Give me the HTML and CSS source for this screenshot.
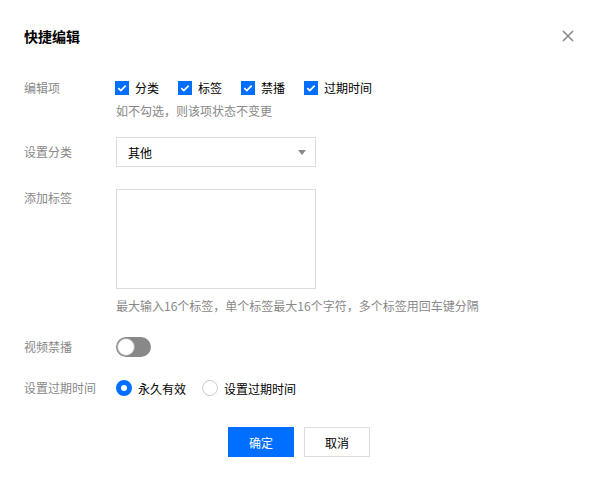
FILE: index.html
```html
<!DOCTYPE html>
<html lang="zh-CN">
<head>
<meta charset="utf-8">
<title>快捷编辑</title>
<link rel="stylesheet" href="styles.css">
</head>
<body>
<div class="dialog">
  <div class="header">
    <h2 class="title">快捷编辑</h2>
    <span class="close" aria-label="关闭">
      <svg width="12" height="12" viewBox="0 0 12 12"><path d="M1 1L11 11M11 1L1 11" stroke="#888" stroke-width="1.6" fill="none"/></svg>
    </span>
  </div>

  <div class="form">
    <div class="row row-items">
      <div class="label">编辑项</div>
      <div class="control">
        <div class="checks">
          <label class="check"><span class="box"><svg width="14" height="14" viewBox="0 0 14 14"><path d="M3.3 7.2L5.8 9.6L10.7 4.6" stroke="#fff" stroke-width="1.8" fill="none"/></svg></span><span>分类</span></label>
          <label class="check"><span class="box"><svg width="14" height="14" viewBox="0 0 14 14"><path d="M3.3 7.2L5.8 9.6L10.7 4.6" stroke="#fff" stroke-width="1.8" fill="none"/></svg></span><span>标签</span></label>
          <label class="check"><span class="box"><svg width="14" height="14" viewBox="0 0 14 14"><path d="M3.3 7.2L5.8 9.6L10.7 4.6" stroke="#fff" stroke-width="1.8" fill="none"/></svg></span><span>禁播</span></label>
          <label class="check"><span class="box"><svg width="14" height="14" viewBox="0 0 14 14"><path d="M3.3 7.2L5.8 9.6L10.7 4.6" stroke="#fff" stroke-width="1.8" fill="none"/></svg></span><span>过期时间</span></label>
        </div>
        <div class="hint hint-items">如不勾选，则该项状态不变更</div>
      </div>
    </div>

    <div class="row row-select">
      <div class="label label-mid">设置分类</div>
      <div class="control">
        <div class="select"><span>其他</span><span class="arrow"></span></div>
      </div>
    </div>

    <div class="row row-tags">
      <div class="label label-top">添加标签</div>
      <div class="control">
        <div class="textarea"></div>
        <div class="hint hint-tags">最大输入16个标签，单个标签最大16个字符，多个标签用回车键分隔</div>
      </div>
    </div>

    <div class="row row-switch">
      <div class="label">视频禁播</div>
      <div class="control">
        <span class="switch"><span class="knob"></span></span>
      </div>
    </div>

    <div class="row row-radio">
      <div class="label">设置过期时间</div>
      <div class="control radios">
        <label class="radio"><span class="dot on"></span><span>永久有效</span></label>
        <label class="radio"><span class="dot"></span><span>设置过期时间</span></label>
      </div>
    </div>
  </div>

  <div class="footer">
    <button class="btn btn-primary">确定</button>
    <button class="btn">取消</button>
  </div>
</div>
</body>
</html>
```

FILE: styles.css
```css
* { box-sizing: border-box; }
html, body {
  margin: 0;
  padding: 0;
  background: #fff;
}
body {
  font-family: "Noto Sans CJK SC", "Noto Sans", sans-serif;
  font-size: 12px;
  color: #000;
}
.dialog {
  width: 594px;
  height: 479px;
  padding: 26px 18px 0 24px;
}
.header {
  display: flex;
  justify-content: space-between;
  align-items: center;
  height: 20px;
}
.title {
  margin: 0;
  font-size: 14px;
  font-weight: bold;
  line-height: 20px;
}
.close {
  width: 16px;
  height: 16px;
  display: flex;
  align-items: center;
  justify-content: center;
  margin-top: -1px;
}
.form {
  margin-top: 32px;
}
.row {
  display: flex;
}
.label {
  width: 92px;
  flex: none;
  color: #888;
  line-height: 20px;
}
.label-mid { padding-top: 5px; }
.label-top { margin-top: -1px; }
.control { flex: 1; }

.checks {
  display: flex;
  height: 20px;
  align-items: center;
  margin-left: -1px;
}
.check {
  display: flex;
  align-items: center;
  margin-right: 19px;
  line-height: 20px;
}
.box {
  width: 14px;
  height: 14px;
  background: #006eff;
  margin-right: 6px;
  display: flex;
}
.hint {
  color: #888;
  line-height: 20px;
}
.hint-items { margin-top: 3px; }
.hint-tags { margin-top: 7px; }

.row-select { margin-top: 16px; }
.select {
  width: 200px;
  height: 30px;
  border: 1px solid #ddd;
  display: flex;
  align-items: center;
  justify-content: space-between;
  padding: 0 9px 0 11px;
}
.arrow {
  width: 0;
  height: 0;
  border-left: 4px solid transparent;
  border-right: 4px solid transparent;
  border-top: 5px solid #888;
  margin-top: 1px;
}

.row-tags { margin-top: 22px; }
.textarea {
  width: 200px;
  height: 100px;
  border: 1px solid #ddd;
}

.row-switch { margin-top: 21px; }
.switch {
  display: block;
  width: 35px;
  height: 20px;
  border-radius: 10px;
  background: #888;
  position: relative;
}
.knob {
  position: absolute;
  left: 1px;
  top: 1px;
  width: 18px;
  height: 18px;
  border-radius: 50%;
  background: #fff;
  border: 1px solid #aaa;
}

.row-radio { margin-top: 21px; }
.radios {
  display: flex;
  align-items: center;
  height: 20px;
}
.radio {
  display: flex;
  align-items: center;
  margin-right: 16px;
}
.dot {
  width: 16px;
  height: 16px;
  border-radius: 50%;
  border: 1px solid #ccc;
  margin-right: 6px;
  background: #fff;
}
.dot.on {
  border: 5px solid #006eff;
}

.footer {
  display: flex;
  justify-content: center;
  gap: 10px;
  margin-top: 29px;
  padding-right: 2px;
}
.btn {
  width: 66px;
  height: 30px;
  border: 1px solid #ddd;
  background: #fff;
  color: #000;
  font-family: inherit;
  font-size: 12px;
  padding: 0;
  cursor: pointer;
}
.btn-primary {
  background: #006eff;
  border-color: #006eff;
  color: #fff;
}
```
